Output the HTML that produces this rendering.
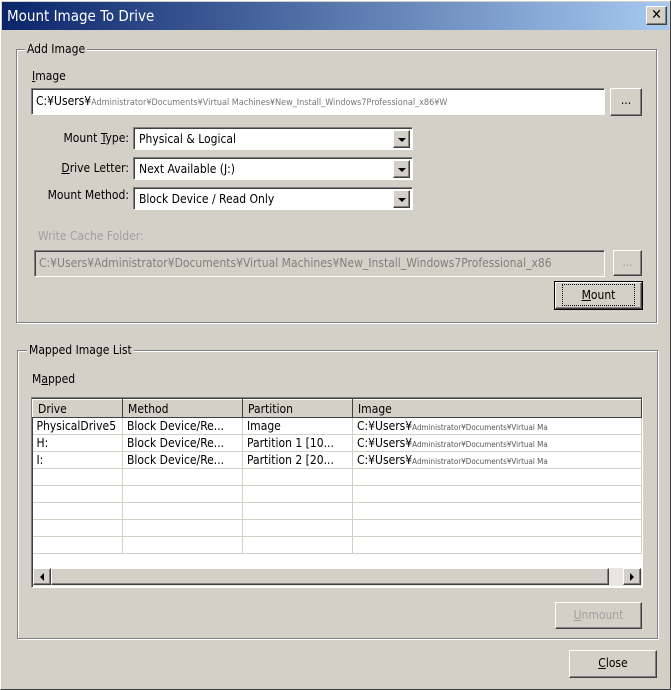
<!DOCTYPE html><html><head><style>
*{box-sizing:border-box;margin:0;padding:0}
body{width:671px;height:690px;background:#d4d0c8;font-family:"DejaVu Sans Condensed","Liberation Sans","Noto Sans CJK JP",sans-serif;font-size:12px;color:#000;position:relative;overflow:hidden;border:1px solid #fff;border-right-color:#404040;border-bottom-color:#404040}
.a{position:absolute}
.title{left:1px;top:1px;width:667px;height:28px;background:linear-gradient(90deg,#0a246a,#a6caf0);color:#fff;font-size:15px;padding:5px 0 0 5px}
.btn{position:absolute;background:#d4d0c8;border:1px solid;border-color:#fff #404040 #404040 #fff;box-shadow:inset -1px -1px #808080;text-align:center}
.sunk{position:absolute;background:#fff;border:1px solid;border-color:#808080 #fff #fff #808080;box-shadow:inset 1px 1px #404040}
.grp{position:absolute;border:1px solid #808080;box-shadow:1px 1px #fff, inset 1px 1px #fff}
.lg{position:absolute;background:#d4d0c8;padding:0 2px}
.dd{position:absolute;right:2px;top:2px;width:17px;height:18px}
.arr{width:0;height:0;border-left:4px solid transparent;border-right:4px solid transparent;border-top:4px solid #000;margin:7px auto 0}
.rt{position:absolute;text-align:right;width:100px}
table{border-collapse:collapse;position:absolute;left:0px;top:1px;width:610px}
td{height:17px;border-right:1px solid #d4d0c8;border-bottom:1px solid #d4d0c8;padding:0 4px;white-space:nowrap;overflow:hidden}
th{height:18px;background:#d4d0c8;font-weight:normal;text-align:left;padding:0 5px;border:1px solid;border-color:#fff #404040 #404040 #fff}
</style></head><body>
<div class="a title">Mount Image To Drive</div>
<div class="btn" style="left:645px;top:5px;width:21px;height:19px;font-weight:bold;font-size:14px;line-height:16px">✕</div>

<div class="grp" style="left:15px;top:48px;width:641px;height:274px"></div>
<div class="lg" style="left:24px;top:41px">Add Image</div>
<div class="a" style="left:31px;top:68px"><u>I</u>mage</div>
<div class="sunk" style="left:30px;top:87px;width:574px;height:27px;padding:5px 4px;white-space:nowrap;overflow:hidden">C:¥Users¥<span style="color:#777;font-size:9px">Administrator¥Documents¥Virtual Machines¥New_Install_Windows7Professional_x86¥W</span></div>
<div class="btn" style="left:609px;top:87px;width:32px;height:28px;line-height:22px">...</div>

<div class="rt" style="left:28px;top:130px">Mount <u>T</u>ype:</div>
<div class="sunk" style="left:132px;top:126px;width:280px;height:23px;padding:4px 5px">Physical &amp; Logical<div class="btn dd"><div class="arr"></div></div></div>
<div class="rt" style="left:28px;top:160px"><u>D</u>rive Letter:</div>
<div class="sunk" style="left:132px;top:156px;width:280px;height:23px;padding:4px 5px">Next Available (J:)<div class="btn dd"><div class="arr"></div></div></div>
<div class="rt" style="left:28px;top:187px">Mount Method:</div>
<div class="sunk" style="left:132px;top:186px;width:280px;height:23px;padding:4px 5px">Block Device / Read Only<div class="btn dd"><div class="arr"></div></div></div>

<div class="a" style="left:37px;top:228px;color:#a0a0a0">Write Cache Folder:</div>
<div class="sunk" style="left:33px;top:249px;width:571px;height:27px;background:#d4d0c8;color:#808080;padding:5px 4px;white-space:nowrap">C:¥Users¥Administrator¥Documents¥Virtual Machines¥New_Install_Windows7Professional_x86</div>
<div class="btn" style="left:612px;top:249px;width:29px;height:26px;color:#a0a0a0;line-height:22px">...</div>
<div class="a" style="left:553px;top:280px;width:89px;height:29px;border:1px solid #000"></div>
<div class="btn" style="left:554px;top:281px;width:87px;height:27px;line-height:24px"><span style="outline:1px dotted #000;outline-offset:3px;padding:0 16px"><u>M</u>ount</span></div>

<div class="grp" style="left:16px;top:349px;width:641px;height:289px"></div>
<div class="lg" style="left:26px;top:342px">Mapped Image List</div>
<div class="a" style="left:31px;top:371px">M<u>a</u>pped</div>
<div class="sunk" style="left:30px;top:396px;width:612px;height:191px;overflow:hidden">
<table>
<tr><th style="width:90px">Drive</th><th style="width:120px">Method</th><th style="width:110px">Partition</th><th>Image</th></tr>
<tr><td>PhysicalDrive5</td><td>Block Device/Re...</td><td>Image</td><td>C:¥Users¥<span style="font-size:8px;color:#555">Administrator¥Documents¥Virtual Ma</span></td></tr>
<tr><td>H:</td><td>Block Device/Re...</td><td>Partition 1 [10...</td><td>C:¥Users¥<span style="font-size:8px;color:#555">Administrator¥Documents¥Virtual Ma</span></td></tr>
<tr><td>I:</td><td>Block Device/Re...</td><td>Partition 2 [20...</td><td>C:¥Users¥<span style="font-size:8px;color:#555">Administrator¥Documents¥Virtual Ma</span></td></tr>
<tr><td></td><td></td><td></td><td></td></tr>
<tr><td></td><td></td><td></td><td></td></tr>
<tr><td></td><td></td><td></td><td></td></tr>
<tr><td></td><td></td><td></td><td></td></tr>
<tr><td></td><td></td><td></td><td></td></tr>
</table>
<div class="a" style="left:1px;top:170px;width:609px;height:18px;background:#e8e6e0"></div>
<div class="btn" style="left:1px;top:170px;width:18px;height:17px"><div style="width:0;height:0;border-top:4px solid transparent;border-bottom:4px solid transparent;border-right:4px solid #000;margin:4px auto 0"></div></div>
<div class="btn" style="left:19px;top:170px;width:558px;height:17px"></div>
<div class="btn" style="left:591px;top:170px;width:18px;height:17px"><div style="width:0;height:0;border-top:4px solid transparent;border-bottom:4px solid transparent;border-left:4px solid #000;margin:4px auto 0"></div></div>
</div>
<div class="btn" style="left:554px;top:601px;width:87px;height:27px;line-height:24px;color:#a0a0a0"><u>U</u>nmount</div>
<div class="btn" style="left:568px;top:649px;width:88px;height:28px;line-height:25px"><u>C</u>lose</div>
</body></html>
